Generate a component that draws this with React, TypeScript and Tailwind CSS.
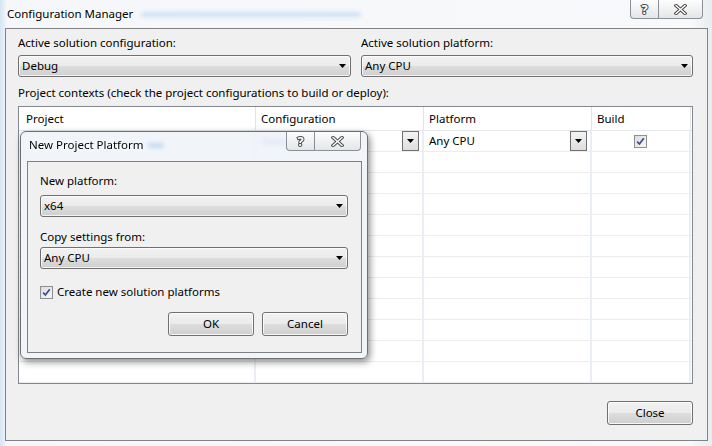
import React from 'react';

// Win7 style pieces
function Arrow() {
    return (
        <svg width="7" height="4" viewBox="0 0 7 4" className="shrink-0">
            <path d="M0 0h7L3.5 4z" fill="#000"/>
        </svg>
    );
}

function Combo({value}: { value: string }) {
    return (
        <div className="h-[22px] flex items-center justify-between pl-[3px] pr-[4px] border border-[#707070] rounded-[3px] bg-[linear-gradient(#f2f2f2_0%,#ebebeb_48%,#dddddd_52%,#cfcfcf_100%)] shadow-[inset_0_0_0_1px_rgba(255,255,255,0.75)]">
            <span>{value}</span>
            <Arrow/>
        </div>
    );
}

function Button({label, className}: { label: string; className?: string }) {
    return (
        <div className={"h-[24px] flex items-center justify-center border border-[#707070] rounded-[3px] bg-[linear-gradient(#f2f2f2_0%,#ebebeb_48%,#dddddd_52%,#cfcfcf_100%)] shadow-[inset_0_0_0_1px_rgba(255,255,255,0.8)] " + (className || '')}>
            {label}
        </div>
    );
}

function Check() {
    return (
        <div className="w-[13px] h-[13px] border border-[#8e8f8f] bg-[linear-gradient(135deg,#dcdcdc,#f8f8f8)] flex items-center justify-center shrink-0">
            <svg width="9" height="9" viewBox="0 0 9 9">
                <path d="M1.2 4.6 L3.4 7 L7.8 1.2" fill="none" stroke="#3a4e8c" strokeWidth="1.7"/>
            </svg>
        </div>
    );
}

function GridDrop() {
    return (
        <div className="w-[17px] h-[20px] mr-[3px] border border-[#707070] bg-[linear-gradient(#f4f4f4,#dedede)] flex items-center justify-center">
            <Arrow/>
        </div>
    );
}

function CaptionButtons({closeW}: { closeW: string }) {
    return (
        <div className="flex h-[19px] rounded-b-[4px] border border-t-0 border-[#8b9097] bg-[linear-gradient(#fdfdfd,#e4e6e9)] overflow-hidden">
            <div className="w-[28px] flex items-center justify-center border-r border-[#8b9097]">
                <span className="text-[13px] leading-[13px] font-bold text-white [-webkit-text-stroke:2px_#4d4d4d] [paint-order:stroke_fill]">?</span>
            </div>
            <div className={closeW + " flex items-center justify-center"}>
                <svg width="13" height="11" viewBox="0 0 13 11">
                    <path d="M2 1.5 L11 9.5 M11 1.5 L2 9.5" stroke="#4d4d4d" strokeWidth="3.4" strokeLinecap="square"/>
                    <path d="M2 1.5 L11 9.5 M11 1.5 L2 9.5" stroke="#fff" strokeWidth="1.4" strokeLinecap="square"/>
                </svg>
            </div>
        </div>
    );
}

const rows = Array.from({length: 12}, (_, i) => i);

export default function App() {
    return (
        <div className="relative w-[712px] h-[446px] overflow-hidden bg-[linear-gradient(90deg,#d3e5f4_0px,#f5f7fa_7px,#f7f9fb_690px,#e9ecef_712px)] text-[11.5px] leading-[16px] text-black font-['Segoe_UI','Noto_Sans',sans-serif]">
            {/* title bar */}
            <div className="h-[28px] flex items-start">
                <span className="pl-[7px] pt-[6px] [text-shadow:0_0_6px_#fff]">Configuration Manager</span>
                <div className="ml-[8px] mt-[12px] h-[5px] w-[220px] rounded-full bg-[#cde1f3] blur-[2px]"/>
                <div className="ml-auto mr-[9px]">
                    <CaptionButtons closeW="w-[43px]"/>
                </div>
            </div>

            {/* client */}
            <div className="ml-[5px] mr-[4px] h-[413px] border border-[#838383] bg-[#f0f0f0] pl-[12px] pr-[14px] flex flex-col">
                <div className="grid grid-cols-[333px_332px] gap-x-[10px] mt-[6px]">
                    <div>
                        <div>Active solution configuration:</div>
                        <div className="mt-[4px]"><Combo value="Debug"/></div>
                    </div>
                    <div>
                        <div>Active solution platform:</div>
                        <div className="mt-[4px]"><Combo value="Any CPU"/></div>
                    </div>
                </div>

                <div className="mt-[8px]">Project contexts (check the project configurations to build or deploy):</div>

                <div className="mt-[5px] h-[278px] border border-[#828790] bg-white flex flex-col">
                    <div className="grid grid-cols-[237px_168px_168px_99px_1fr] h-[24px] border-b border-[#e4e7eb]">
                        <div className="pl-[7px] flex items-center border-r border-[#e2e4e8]">Project</div>
                        <div className="pl-[5px] flex items-center border-r border-[#e2e4e8]">Configuration</div>
                        <div className="pl-[5px] flex items-center border-r border-[#e2e4e8]">Platform</div>
                        <div className="pl-[5px] flex items-center border-r border-[#e2e4e8]">Build</div>
                        <div/>
                    </div>
                    {rows.map(i => (
                        <div key={i} className="grid grid-cols-[237px_168px_168px_99px_1fr] h-[21px] border-b border-[#ededed]">
                            <div className="border-r-2 border-[#e9eef5]"/>
                            <div className="pl-[5px] flex items-center justify-between border-r-2 border-[#e9eef5]">
                                {i === 0 && <><span className="text-[#5a7fb5]">Debug</span><GridDrop/></>}
                            </div>
                            <div className="pl-[5px] flex items-center justify-between border-r-2 border-[#e9eef5]">
                                {i === 0 && <><span>Any CPU</span><GridDrop/></>}
                            </div>
                            <div className="flex items-center justify-center border-r-2 border-[#e9eef5]">
                                {i === 0 && <Check/>}
                            </div>
                            <div/>
                        </div>
                    ))}
                </div>

                <div className="mt-[17px] flex justify-end">
                    <Button label="Close" className="w-[86px] h-[23px]"/>
                </div>
            </div>

            {/* New Project Platform dialog, floating over the grid */}
            <div className="absolute left-[20px] top-[131px] w-[348px] h-[228px] rounded-[6px] border border-[#6f6f6f] bg-[rgba(238,243,249,0.82)] backdrop-blur-[2px] shadow-[2px_3px_7px_rgba(0,0,0,0.45)] flex flex-col">
                <div className="h-[29px] flex items-start">
                    <span className="pl-[8px] pt-[5px] [text-shadow:0_0_6px_#fff]">New Project Platform</span>
                    <div className="ml-[4px] mt-[11px] h-[5px] w-[16px] rounded-full bg-[#c3d8ee] blur-[2px]"/>
                    <div className="ml-auto mr-[6px]">
                        <CaptionButtons closeW="w-[45px]"/>
                    </div>
                </div>
                <div className="ml-[6px] mr-[5px] mb-[5px] flex-1 border border-[#808080] bg-[#f0f0f0] pl-[12px] pr-[13px] flex flex-col">
                    <div className="mt-[11px]">New platform:</div>
                    <div className="mt-[6px]"><Combo value="x64"/></div>
                    <div className="mt-[12px]">Copy settings from:</div>
                    <div className="mt-[2px]"><Combo value="Any CPU"/></div>
                    <div className="mt-[15px] flex items-center gap-[4px] h-[16px]">
                        <Check/>
                        <span>Create new solution platforms</span>
                    </div>
                    <div className="mt-[12px] flex justify-end gap-[8px]">
                        <Button label="OK" className="w-[86px]"/>
                        <Button label="Cancel" className="w-[86px]"/>
                    </div>
                </div>
            </div>
        </div>
    );
}
